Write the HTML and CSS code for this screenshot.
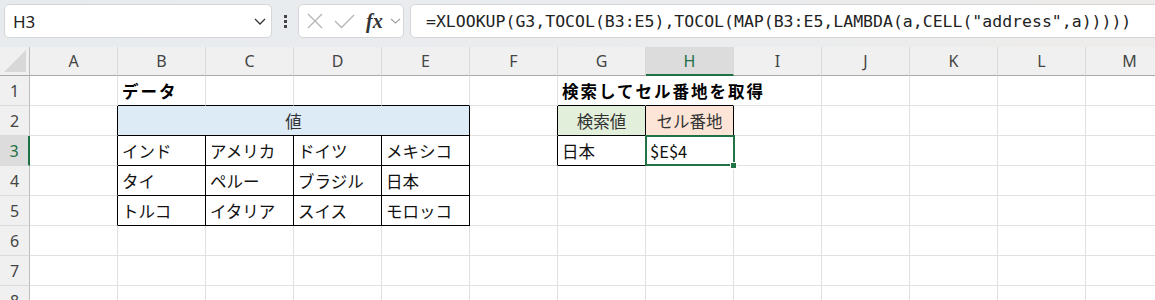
FILE: index.html
```html
<!DOCTYPE html>
<html lang="ja">
<head>
  <meta charset="UTF-8">
  <meta name="viewport" content="width=device-width, initial-scale=1.0">
  <title>XLOOKUP セル番地</title>
  <link rel="stylesheet" href="styles.css">
</head>
<body>
  <div class="toolbar">
    <div class="name-box">
      <span class="name">H3</span>
      <svg class="chev" width="12" height="7" viewBox="0 0 12 7"><path d="M1 1 L6 6 L11 1" fill="none" stroke="#333" stroke-width="1.3"/></svg>
    </div>
    <div class="dots"><span></span><span></span><span></span></div>
    <div class="fx-box">
      <svg class="icon-x" width="16" height="16" viewBox="0 0 16 16"><path d="M1 1 L15 15 M15 1 L1 15" fill="none" stroke="#b4b4b4" stroke-width="1.3"/></svg>
      <svg class="icon-check" width="21" height="15" viewBox="0 0 21 15"><path d="M1 7 L7.5 13.5 L20 1" fill="none" stroke="#b4b4b4" stroke-width="1.3"/></svg>
      <span class="fx">fx</span>
      <svg class="chev-small" width="11" height="6" viewBox="0 0 11 6"><path d="M1 1 L5.5 5 L10 1" fill="none" stroke="#a0a0a0" stroke-width="1.1"/></svg>
    </div>
    <div class="formula">=XLOOKUP(G3,TOCOL(B3:E5),TOCOL(MAP(B3:E5,LAMBDA(a,CELL("address",a)))))</div>
  </div>
  <div class="sheet" id="sheet"></div>
  <script>
    const sheet = document.getElementById("sheet");
    const COLS = "ABCDEFGHIJKLM".split("");
    const ROWS = 8;
    const ACTIVE = { col: "H", row: 3 };

    const cells = {
      B1: { text: "データ", cls: "title" },
      G1: { text: "検索してセル番地を取得", cls: "title", spill: 2 },
      B2: { text: "値", cls: "head blue", span: 4 },
      B3: "インド", C3: "アメリカ", D3: "ドイツ", E3: "メキシコ",
      B4: "タイ", C4: "ペルー", D4: "ブラジル", E4: "日本",
      B5: "トルコ", C5: "イタリア", D5: "スイス", E5: "モロッコ",
      G2: { text: "検索値", cls: "head green" },
      H2: { text: "セル番地", cls: "head orange" },
      G3: "日本", H3: "$E$4"
    };

    // ranges with black borders: [firstCol, firstRow, lastCol, lastRow]
    const boxes = [[1, 2, 4, 5], [6, 2, 7, 3]];

    function inBox(c, r) {
      return boxes.some(b => c >= b[0] && c <= b[2] && r >= b[1] && r <= b[3]);
    }

    function addDiv(cls, text) {
      const el = document.createElement("div");
      el.className = cls;
      if (text) el.textContent = text;
      sheet.appendChild(el);
      return el;
    }

    addDiv("corner");
    COLS.forEach(c => addDiv(c === ACTIVE.col ? "col-head selected" : "col-head", c));

    for (let r = 1; r <= ROWS; r++) {
      addDiv(r === ACTIVE.row ? "row-head selected" : "row-head", String(r));
      let hidden = 0;
      COLS.forEach((c, i) => {
        if (hidden > 0) { hidden--; return; }
        let info = cells[c + r] || {};
        if (typeof info === "string") info = { text: info };
        const span = info.span || 1;
        const last = i + span - 1;
        const el = addDiv("cell " + (info.cls || ""), info.text);
        if (span > 1) {
          el.style.gridColumn = `span ${span}`;
          hidden = span - 1;
        }
        if (inBox(last, r) || inBox(last + 1, r)) el.classList.add("line-right");
        if (inBox(i, r) || inBox(i, r + 1)) el.classList.add("line-bottom");
        if (c === ACTIVE.col && r === ACTIVE.row) el.classList.add("active");
      });
      // overflowing titles hide the gridlines of the cells they run into
      COLS.forEach((c, i) => {
        const info = cells[c + r];
        if (info && info.spill) {
          const rowCells = Array.from(sheet.children).slice(-COLS.length);
          for (let k = i; k < i + info.spill; k++) rowCells[k].classList.add("no-right");
        }
      });
    }
  </script>
</body>
</html>
```

FILE: styles.css
```css
body {
  margin: 0;
  width: 1155px;
  height: 300px;
  overflow: hidden;
  background-color: #fff;
  font-family: "Noto Sans CJK JP", sans-serif;
}
.toolbar {
  display: flex;
  align-items: flex-start;
  height: 47px;
  padding: 4px 0 0 4px;
  box-sizing: border-box;
  background: linear-gradient(90deg, #e8ebee 0%, #eaecee 60%, #eeecea 100%);
}
.name-box {
  flex: none;
  display: flex;
  align-items: center;
  justify-content: space-between;
  width: 268px;
  height: 34px;
  box-sizing: border-box;
  padding: 0 5px 0 8px;
  border: 1px solid #d6d6d6;
  border-radius: 5px;
  background-color: #fff;
}
.name {
  font-family: "Noto Sans", sans-serif;
  font-size: 17px;
  color: #222;
}
.dots {
  flex: none;
  display: flex;
  flex-direction: column;
  align-items: center;
  justify-content: center;
  gap: 2px;
  width: 26px;
  height: 34px;
}
.dots span {
  width: 3px;
  height: 3px;
  background-color: #444;
}
.fx-box {
  flex: none;
  display: flex;
  align-items: center;
  width: 106px;
  height: 34px;
  box-sizing: border-box;
  padding-left: 8px;
  margin-right: 6px;
  border: 1px solid #d6d6d6;
  border-radius: 5px;
  background-color: #fff;
}
.icon-x {
  margin-right: 11px;
}
.icon-check {
  margin-right: 11px;
}
.fx {
  font-family: "Liberation Serif", serif;
  font-style: italic;
  font-weight: 700;
  font-size: 20px;
  color: #333;
  margin-right: 7px;
  line-height: 1;
}
.formula {
  flex: none;
  display: flex;
  align-items: center;
  width: 760px;
  height: 34px;
  box-sizing: border-box;
  padding-left: 15px;
  border: 1px solid #d6d6d6;
  border-radius: 5px;
  background-color: #fff;
  font-family: "DejaVu Sans Mono", monospace;
  font-size: 16.5px;
  color: #222;
  white-space: nowrap;
}
.sheet {
  display: grid;
  grid-template-columns: 30px repeat(13, 88px);
  grid-template-rows: 29px repeat(8, 30px);
}
.corner {
  position: relative;
  background-color: #f0f0f0;
  border-right: 1px solid #bdbdbd;
  border-bottom: 1px solid #a8a8a8;
}
.corner::after {
  content: "";
  position: absolute;
  right: 3px;
  bottom: 3px;
  width: 22px;
  height: 22px;
  background-color: #d8d8d8;
  clip-path: polygon(100% 0, 100% 100%, 0 100%);
}
.col-head,
.row-head {
  display: flex;
  align-items: center;
  justify-content: center;
  box-sizing: border-box;
  background-color: #f0f0f0;
  font-family: "Noto Sans", sans-serif;
  font-size: 16px;
  color: #444;
}
.col-head {
  border-right: 1px solid #dadada;
  border-bottom: 1px solid #a8a8a8;
}
.row-head {
  border-right: 1px solid #bdbdbd;
  border-bottom: 1px solid #dadada;
}
.col-head.selected {
  background-color: #dcdcdc;
  color: #1e7145;
  border-bottom: 2px solid #1e7145;
}
.row-head.selected {
  background-color: #dcdcdc;
  color: #1e7145;
  border-right: 2px solid #1e7145;
}
.cell {
  position: relative;
  display: flex;
  align-items: center;
  box-sizing: border-box;
  padding-left: 4px;
  border-right: 1px solid #e1e1e1;
  border-bottom: 1px solid #e1e1e1;
  font-size: 16.5px;
  color: #111;
  white-space: nowrap;
  min-width: 0;
}
.cell.title {
  font-weight: 700;
  letter-spacing: 2px;
  color: #000;
}
.cell.head {
  justify-content: center;
  padding-left: 0;
  color: #333;
}
.cell.blue {
  background-color: #ddebf7;
}
.cell.green {
  background-color: #e2efda;
}
.cell.orange {
  background-color: #fce4d6;
}
.cell.line-right {
  border-right-color: #000;
}
.cell.line-bottom {
  border-bottom-color: #000;
}
.cell.no-right {
  border-right-color: transparent;
}
.cell.active::before {
  content: "";
  position: absolute;
  top: -1px;
  left: -1px;
  right: -2px;
  bottom: -1px;
  border: 2px solid #217346;
}
.cell.active::after {
  content: "";
  position: absolute;
  right: -4px;
  bottom: -4px;
  width: 5px;
  height: 5px;
  background-color: #217346;
  border: 1px solid #fff;
  z-index: 1;
}
```
